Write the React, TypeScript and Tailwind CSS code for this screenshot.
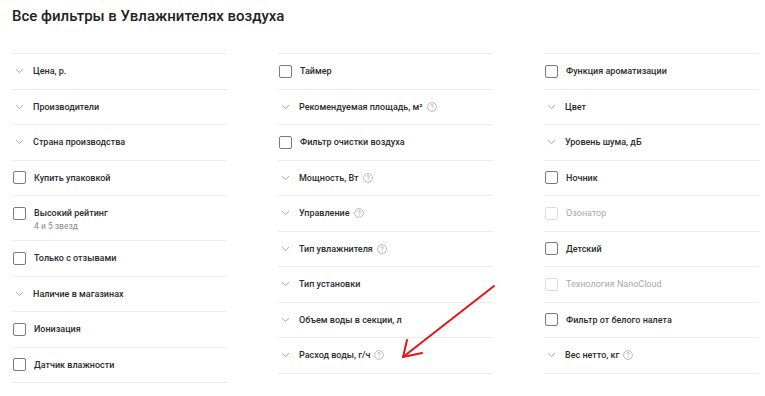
import { ReactNode } from "react";

type Row = {
    label: string;
    kind: "check" | "drop";
    help?: boolean;
    sub?: string;
    disabled?: boolean;
};

const columns: Row[][] = [
    [
        { label: "Цена, р.", kind: "drop" },
        { label: "Производители", kind: "drop" },
        { label: "Страна производства", kind: "drop" },
        { label: "Купить упаковкой", kind: "check" },
        { label: "Высокий рейтинг", kind: "check", sub: "4 и 5 звезд" },
        { label: "Только с отзывами", kind: "check" },
        { label: "Наличие в магазинах", kind: "drop" },
        { label: "Ионизация", kind: "check" },
        { label: "Датчик влажности", kind: "check" },
    ],
    [
        { label: "Таймер", kind: "check" },
        { label: "Рекомендуемая площадь, м²", kind: "drop", help: true },
        { label: "Фильтр очистки воздуха", kind: "check" },
        { label: "Мощность, Вт", kind: "drop", help: true },
        { label: "Управление", kind: "drop", help: true },
        { label: "Тип увлажнителя", kind: "drop", help: true },
        { label: "Тип установки", kind: "drop" },
        { label: "Объем воды в секции, л", kind: "drop" },
        { label: "Расход воды, г/ч", kind: "drop", help: true },
    ],
    [
        { label: "Функция ароматизации", kind: "check" },
        { label: "Цвет", kind: "drop" },
        { label: "Уровень шума, дБ", kind: "drop" },
        { label: "Ночник", kind: "check" },
        { label: "Озонатор", kind: "check", disabled: true },
        { label: "Детский", kind: "check" },
        { label: "Технология NanoCloud", kind: "check", disabled: true },
        { label: "Фильтр от белого налета", kind: "check" },
        { label: "Вес нетто, кг", kind: "drop", help: true },
    ],
];

function Chevron() {
    return (
        <svg width="9" height="6" viewBox="0 0 9 6" className="ml-[3px] mr-[9px] shrink-0">
            <path d="M1 1.2 L4.5 4.6 L8 1.2" fill="none" stroke="#a5a5a5" strokeWidth="1" />
        </svg>
    );
}

function Checkbox({ disabled }: { disabled?: boolean }) {
    return (
        <span
            className={`ml-px mr-2 block h-[13px] w-[13px] shrink-0 rounded-[2px] border-[1.5px] bg-white ${
                disabled ? "border-[#dcdcdc]" : "border-[#7a7a7a]"
            }`}
        />
    );
}

function Help() {
    return (
        <svg width="10" height="10" viewBox="0 0 10 10" className="ml-[4px] shrink-0">
            <circle cx="5" cy="5" r="4.4" fill="none" stroke="#a8a8a8" strokeWidth="0.8" />
            <path d="M3.6 3.9 C3.6 3 4.2 2.6 5 2.6 C5.8 2.6 6.4 3.1 6.4 3.8 C6.4 4.7 5.1 4.8 5.1 5.8" fill="none" stroke="#a8a8a8" strokeWidth="0.8" />
            <circle cx="5.1" cy="7.3" r="0.5" fill="#a8a8a8" />
        </svg>
    );
}

function FilterRow({ row }: { row: Row }) {
    let icon: ReactNode = row.kind === "check" ? <Checkbox disabled={row.disabled} /> : <Chevron />;
    return (
        <div
            className={`flex border-b border-[#ececec] ${row.sub ? "h-[45px] items-start pt-[10px]" : "h-[35.5px] items-center"}`}
        >
            <div className={row.sub ? "pt-px" : ""}>{icon}</div>
            <div>
                <div
                    className={`flex items-center text-[9px] font-medium leading-[14px] ${
                        row.disabled ? "text-[#a9a9a9] font-normal" : "text-[#2b2b2b]"
                    }`}
                >
                    {row.label}
                    {row.help && <Help />}
                </div>
                {row.sub && <div className="text-[8.5px] leading-[13px] text-[#8a8a8a]">{row.sub}</div>}
            </div>
        </div>
    );
}

export default function App() {
    return (
        <div className="relative h-[396px] w-[765px] overflow-hidden bg-white pl-3 font-['Roboto',_'Liberation_Sans',_sans-serif]">
            <h1 className="pt-[5px] text-[15px] font-medium leading-[22px] text-[#222]">
                Все фильтры в Увлажнителях воздуха
            </h1>
            <div className="mt-[26px] flex gap-[51px]">
                {columns.map((col, i) => (
                    <div key={i} className="w-[215px] border-t border-[#ececec]">
                        {col.map((row) => (
                            <FilterRow key={row.label} row={row} />
                        ))}
                    </div>
                ))}
            </div>
            {/* стрелка-пометка */}
            <svg className="pointer-events-none absolute left-0 top-0" width="765" height="396">
                <path d="M494 286 L403 357" stroke="#e8121b" strokeWidth="2" fill="none" strokeLinecap="round" />
                <path d="M407 340 L403 357 L422 353" stroke="#e8121b" strokeWidth="2" fill="none" strokeLinecap="round" strokeLinejoin="round" />
            </svg>
        </div>
    );
}
